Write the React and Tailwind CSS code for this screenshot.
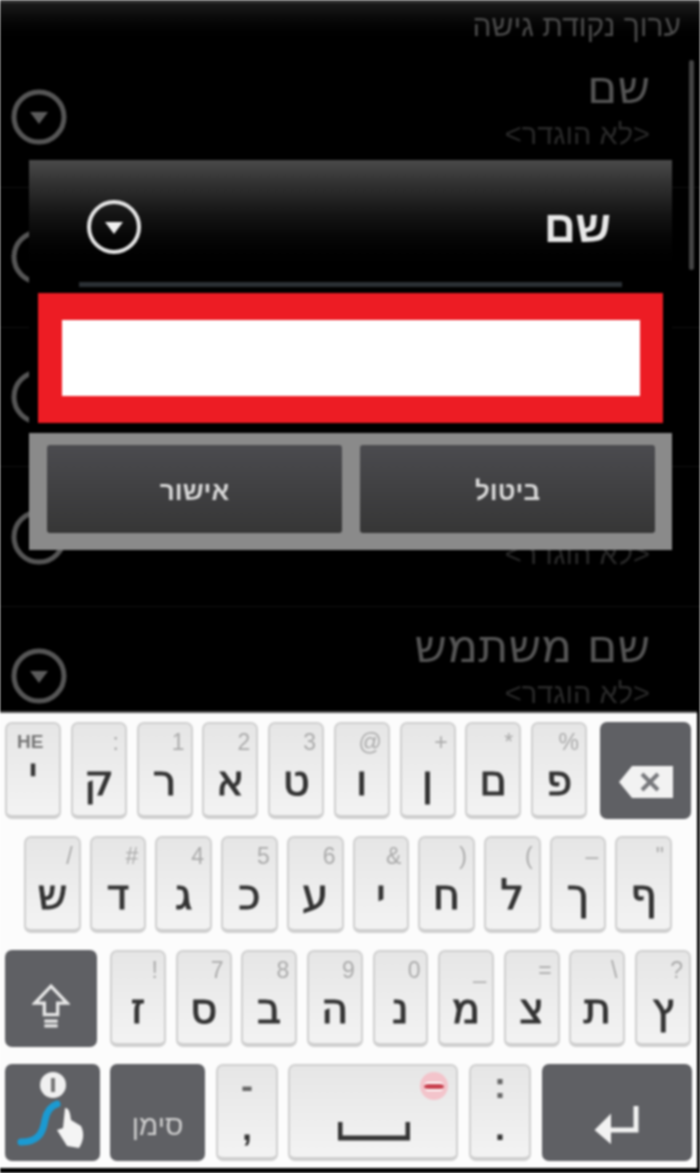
const rowOne = [
  ["'", 'HE'], ['ק', ':'], ['ר', '1'], ['א', '2'], ['ט', '3'],
  ['ו', '@'], ['ן', '+'], ['ם', '*'], ['פ', '%'],
];
const rowTwo = [
  ['ש', '/'], ['ד', '#'], ['ג', '4'], ['כ', '5'], ['ע', '6'],
  ['י', '&'], ['ח', ')'], ['ל', '('], ['ך', '–'], ['ף', '"'],
];
const rowThree = [
  ['ז', '!'], ['ס', '7'], ['ב', '8'], ['ה', '9'], ['נ', '0'],
  ['מ', '_'], ['צ', '='], ['ת', '\\'], ['ץ', '?'],
];
// titles of the middle rows sit behind the dialog
const listRows = [
  { id: 1, title: 'שם' },
  { id: 2, title: '' },
  { id: 3, title: '' },
  { id: 4, title: '' },
  { id: 5, title: 'שם משתמש' },
];

const ArrowCircle = ({ bright }) => (
  <svg viewBox="0 0 56 56" className="w-[56px] h-[56px]">
    <circle cx="28" cy="28" r="25" fill="none" stroke={bright ? '#e6e6e6' : '#565656'} strokeWidth={bright ? 4 : 5} />
    <path d="M19 23 H37 L28 35 Z" fill={bright ? '#f0f0f0' : '#5c5c5c'} />
  </svg>
);

const Key = ({ main, top }) => (
  <div className="relative flex-1 h-[97px] rounded-[7px] border-2 border-b-4 border-[#cfcfcf] bg-gradient-to-b from-[#e6e6e6] to-[#f3f3f3]">
    <span className={top === 'HE'
      ? 'absolute top-[4px] left-[10px] text-[19px] font-bold text-[#777]'
      : 'absolute top-[3px] right-[6px] text-[23px] leading-[30px] text-[#aaa]'}>{top}</span>
    <span className="absolute inset-x-0 top-[34px] text-center text-[42px] leading-[46px] text-[#333] [-webkit-text-stroke:1px_#333] font-['DejaVu_Sans',sans-serif]">{main}</span>
  </div>
);

const DarkKey = ({ className, children }) => (
  <div className={`relative h-[97px] rounded-[7px] bg-[#5f6064] flex items-center justify-center ${className}`}>
    {children}
  </div>
);

const SymbolKey = ({ upper, lower }) => (
  <div className="w-[62px] h-[97px] rounded-[7px] border-2 border-b-4 border-[#cfcfcf] bg-gradient-to-b from-[#e6e6e6] to-[#f3f3f3] flex flex-col items-center text-[#333]">
    <span className="text-[36px] font-bold leading-[36px] mt-[2px] text-[#666]">{upper}</span>
    <span className="text-[36px] font-bold leading-[36px] mt-[6px]">{lower}</span>
  </div>
);

export default function App() {
  return (
    <div className="relative w-[700px] h-[1173px] overflow-hidden bg-black blur-[1px] font-['Liberation_Sans',sans-serif]">
      {/* title bar */}
      <div className="h-[48px] border-t-[3px] border-[#333] bg-gradient-to-b from-[#1a1a1a] to-black flex items-center justify-end pr-[19px]">
        <span dir="rtl" className="text-[30px] text-[#4a4a4a]">ערוך נקודת גישה</span>
      </div>

      {/* settings list behind the dialog */}
      <div className="h-[663px] overflow-hidden">
        {listRows.map((row) => (
          <div key={row.id} className="h-[139.75px] flex items-center justify-between pl-[11px] pr-[50px] border-b border-[#111]">
            <ArrowCircle />
            <div dir="rtl" className="flex flex-col text-right">
              <span className="h-[46px] text-[46px] leading-[46px] mt-[-21px] text-[#555] font-['DejaVu_Sans',sans-serif]">{row.title}</span>
              <span className="text-[29px] leading-[30px] mt-[9px] text-[#2a2a2a]">{'<לא הוגדר>'}</span>
            </div>
          </div>
        ))}
      </div>

      {/* scrollbar */}
      <div className="absolute left-[689px] top-[60px] w-[5px] h-[210px] rounded-full bg-[#444]" />

      {/* dialog */}
      <div className="absolute left-[29px] top-[160px] w-[643px] h-[390px] flex flex-col bg-black rounded-t-[3px]">
        <div className="h-[122px] pl-[57px] pr-[61px] bg-gradient-to-b from-[#4a4a4a] via-[#141414] via-45% to-black flex items-center justify-between pt-[12px]">
          <ArrowCircle bright />
          <span dir="rtl" className="text-[44px] font-bold text-[#e8e8e8]">שם</span>
        </div>
        <div className="mx-[50px] h-[5px] bg-[#2b3034]" />
        <div className="mx-[9px] mt-[6px] h-[130px] bg-[#ed1c24] flex items-center justify-center">
          <div className="w-[578px] h-[76px] bg-white" />
        </div>
        <div className="mt-[10px] h-[117px] bg-[#8a8a8a] flex gap-[18px] pl-[18px] pr-[17px] pt-[12px] pb-[17px]">
          {['אישור', 'ביטול'].map((label) => (
            <div key={label} className="flex-1 rounded-[3px] bg-gradient-to-b from-[#4b4b4f] to-[#363636] flex items-center justify-center pt-[4px]">
              <span dir="rtl" className="text-[26px] font-bold text-[#d8d8d8]">{label}</span>
            </div>
          ))}
        </div>
      </div>

      {/* keyboard */}
      <div className="w-[697px] h-[457px] border-t-[2px] border-[#555] bg-[#fcfcfc] flex flex-col pt-[9px] gap-[17px]">
        <div className="flex pl-[5px]">
          <div className="flex gap-[9.7px] w-[582px]">
            {rowOne.map(([main, top]) => <Key key={main} main={main} top={top} />)}
          </div>
          <DarkKey className="ml-[13px] w-[91px]">
            <svg viewBox="0 0 56 34" className="w-[56px] h-[34px] mt-[22px]">
              <path d="M1 17 L14 1 H55 V33 H14 Z" fill="#f2f2f2" />
              <path d="M24 9 L40 25 M40 9 L24 25" stroke="#77787c" strokeWidth="4" />
            </svg>
          </DarkKey>
        </div>

        <div className="flex pl-[24px] gap-[9px] w-[672px]">
          {rowTwo.map(([main, top]) => <Key key={main} main={main} top={top} />)}
        </div>

        <div className="flex pl-[5px]">
          <DarkKey className="w-[92px]">
            <svg viewBox="0 0 40 48" className="w-[38px] h-[46px] mt-[14px]" fill="none" stroke="#e6e6e6" strokeWidth="3.5">
              <path d="M20 3 L37 21 H27 V33 H13 V21 H3 Z" />
              <path d="M13 40 H27 M13 45 H27" />
            </svg>
          </DarkKey>
          <div className="flex gap-[9.7px] w-[581px] ml-[13px]">
            {rowThree.map(([main, top]) => <Key key={main} main={main} top={top} />)}
          </div>
        </div>

        <div className="flex pl-[5px]">
          <DarkKey className="w-[95px]">
            <svg viewBox="0 0 95 97" className="w-[95px] h-[97px]">
              <circle cx="48" cy="21" r="13" fill="#f0f0f0" />
              <rect x="46" y="14" width="4" height="14" fill="#777" />
              <path d="M16 78 C34 78 38 68 40 56 C42 46 46 42 52 40" fill="none" stroke="#1b9ad2" strokeWidth="7" strokeLinecap="round" />
              <path d="M60 44 C64 44 65 48 66 56 L76 62 C80 70 78 78 74 84 L62 82 L52 66 L58 64 Z" fill="#f4f4f4" />
            </svg>
          </DarkKey>
          <DarkKey className="ml-[10px] w-[95px]">
            <span dir="rtl" className="mt-[26px] text-[28px] text-[#cfcfcf]">סימן</span>
          </DarkKey>
          <div className="ml-[11px]"><SymbolKey upper="-" lower="," /></div>
          <div className="relative ml-[10px] w-[170px] h-[97px] rounded-[7px] border-2 border-b-4 border-[#cfcfcf] bg-gradient-to-b from-[#e6e6e6] to-[#f3f3f3]">
            <svg viewBox="0 0 72 20" className="absolute left-[48px] top-[55px] w-[72px] h-[20px]" fill="none" stroke="#333" strokeWidth="5">
              <path d="M2 1 V17 H70 V1" />
            </svg>
            <div className="absolute left-[130px] top-[6px] w-[28px] h-[28px] rounded-full bg-[#f3c4cb] flex items-center justify-center">
              <div className="w-[20px] h-[9px] rounded-full bg-[#c9414f] border-y-2 border-white" />
            </div>
          </div>
          <div className="ml-[11px]"><SymbolKey upper=":" lower="." /></div>
          <DarkKey className="ml-[11px] w-[150px]">
            <svg viewBox="0 0 46 38" className="w-[46px] h-[38px] mt-[24px]" fill="none" stroke="#f2f2f2" strokeWidth="5">
              <path d="M42 0 V24 H12" />
              <path d="M16 10 L2 24 L16 36 Z" fill="#f2f2f2" strokeWidth="2" />
            </svg>
          </DarkKey>
        </div>
      </div>
    </div>
  );
}
